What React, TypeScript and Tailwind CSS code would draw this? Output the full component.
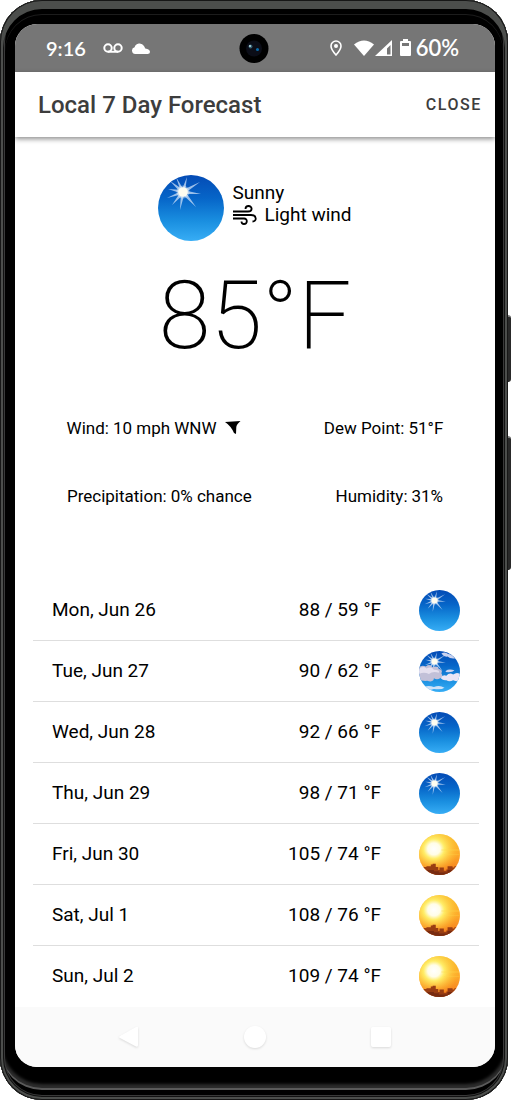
import React, { useId } from "react";
import { twMerge } from "tailwind-merge";

type Sky = "sunny" | "partly" | "hot";

const forecast: { day: string; temps: string; sky: Sky }[] = [
  { day: "Mon, Jun 26", temps: "88 / 59 °F", sky: "sunny" },
  { day: "Tue, Jun 27", temps: "90 / 62 °F", sky: "partly" },
  { day: "Wed, Jun 28", temps: "92 / 66 °F", sky: "sunny" },
  { day: "Thu, Jun 29", temps: "98 / 71 °F", sky: "sunny" },
  { day: "Fri, Jun 30", temps: "105 / 74 °F", sky: "hot" },
  { day: "Sat, Jul 1", temps: "108 / 76 °F", sky: "hot" },
  { day: "Sun, Jul 2", temps: "109 / 74 °F", sky: "hot" },
];

function Star() {
  return (
    <g transform="translate(25 17)">
      <g fill="#dbe8fb" opacity="0.7">
        <path d="M-2 0L-3 18L2 0zM-2 0L-7 -15L2 0zM-2 0L4 -15L2 0z" />
        <path d="M0 -2L18 2L0 2zM0 -2L-15 -3L0 2zM0 -2L-16 6L0 2z" />
        <path d="M-1.500 1.500L13 15L1.500 -1.500zM-1.500 -1.500L-11 13L1.500 1.500z" />
        <path d="M-1.500 -1.500L17 -10L1.500 1.500zM-1.500 1.500L-13 -11L1.500 -1.500z" />
      </g>
      <circle r="6.500" fill="#fff" opacity="0.35" />
      <circle r="4.800" fill="#fffdf0" />
    </g>
  );
}

function WeatherIcon({ sky, className }: { sky: Sky; className: string }) {
  const id = useId().replace(/[^a-zA-Z0-9]/g, "");
  const sk = "sky" + id;
  const cl = "clip" + id;
  const gl = "glow" + id;
  const bl = "blur" + id;
  return (
    <svg viewBox="0 0 66 66" className={twMerge("shrink-0", className)} aria-hidden="true">
      <defs>
        <clipPath id={cl}>
          <circle cx="33" cy="33" r="33" />
        </clipPath>
        <filter id={bl}>
          <feGaussianBlur stdDeviation="0.7" />
        </filter>
        <linearGradient id={sk} x1="0" y1="0" x2="0" y2="1">
          {sky === "hot" ? (
            <>
              <stop offset="0" stopColor="#f9bd30" />
              <stop offset="0.5" stopColor="#fda92a" />
              <stop offset="0.9" stopColor="#f57f1d" />
            </>
          ) : (
            <>
              <stop offset="0" stopColor="#044bb5" />
              <stop offset="0.35" stopColor="#0665c8" />
              <stop offset="0.7" stopColor="#1a8fe0" />
              <stop offset="1" stopColor="#37adf5" />
            </>
          )}
        </linearGradient>
        <radialGradient id={gl}>
          <stop offset="0" stopColor="#fff" />
          <stop offset="0.25" stopColor="#fffde8" />
          <stop offset="0.42" stopColor="#fff06a" stopOpacity="0.95" />
          <stop offset="1" stopColor="#ffc42e" stopOpacity="0" />
        </radialGradient>
      </defs>
      <g clipPath={`url(#${cl})`}>
        <rect width="66" height="66" fill={`url(#${sk})`} />
        {sky === "hot" ? (
          <>
            <ellipse cx="24" cy="24" rx="40" ry="38" fill={`url(#${gl})`} />
            <path d="M36 25h30v1.500H36zM40 32h26v1H40z" fill="#ffd84e" opacity="0.5" />
            <path
              d="M0 66V53H12V52H19V49H22V48H27V53H31V58H33V54H40V59H44V57H46V52H54V54H57V52H66V66z"
              fill="#993d12"
            />
            <path d="M10 58H24V60H32V62H46V58H56V66H10z" fill="#6c2511" opacity="0.75" />
          </>
        ) : (
          <g filter={`url(#${bl})`}>
            <Star />
          </g>
        )}
        {sky === "partly" && (
          <g filter={`url(#${bl})`}>
            <path d="M-2 28Q4 21 11 25Q17 20 22 26Q31 23 32 29Q39 30 36 36Q40 42 34 44Q29 47 24 44Q24 51 13 48Q6 49 -2 45z" fill="#c2c0d8" />
            <path d="M0 29Q6 23 12 28Q20 24 24 30Q34 30 32 35Q22 32 16 37Q8 33 0 37z" fill="#e5e0ef" />
            <path d="M35 44Q38 37 44 40Q49 34 55 38Q62 32 68 39V47Q62 50 55 47Q49 50 44 47Q39 48 35 44z" fill="#e8e6f6" />
            <path d="M43 32Q48 28 57 31Q54 35 43 34zM36 4Q42 0 47 5Q52 5 58 12Q50 13 46 9Q40 10 36 4z" fill="#cbd3ef" />
            <path d="M4 59Q14 54 24 58Q33 54 41 59Q36 63 24 61Q13 65 4 59z" fill="#cfe2f8" />
          </g>
        )}
      </g>
    </svg>
  );
}

function StatusBar() {
  return (
    <div className="flex h-12 items-center justify-between bg-[#767676] pr-9 pl-[31px] font-['Lato',sans-serif] text-xl font-semibold text-white">
      <div className="flex items-center">
        <span>9:16</span>
        <svg viewBox="0 0 20 10" className="ml-[17px] h-[10px] w-5" fill="none" stroke="currentColor" strokeWidth="2" aria-hidden="true">
          <circle cx="5" cy="5" r="3.700" />
          <circle cx="15" cy="5" r="3.700" />
          <path d="M5 8.800H15" />
        </svg>
        <svg viewBox="0 0 18 11" className="ml-[9px] h-[11px] w-[18px]" fill="currentColor" aria-hidden="true">
          <path d="M3.500 11A3.400 3.400 0 0 1 2.600 4.300A5.100 5.100 0 0 1 12 3L13.300 5.500Q18 6 18 9Q18 11 15.500 11z" />
        </svg>
      </div>
      <div className="flex items-center">
        <svg viewBox="0 0 12 16" className="h-4 w-3" aria-hidden="true">
          <path d="M6 1a5 5 0 0 1 5 5C11 9.500 6 15 6 15S1 9.500 1 6A5 5 0 0 1 6 1z" fill="none" stroke="currentColor" strokeWidth="1.600" />
          <circle cx="6" cy="6" r="2" fill="currentColor" />
        </svg>
        <svg viewBox="0 0 38 16" className="ml-3 h-4 w-[38px]" fill="currentColor" aria-hidden="true">
          <path d="M0 4.500Q10 -3.500 20 4.500L10 16z" />
          <path fillRule="evenodd" d="M38 0V16H21zM36.500 5L33 8.500V14.500H36.500z" />
        </svg>
        <svg viewBox="0 0 11 17" className="ml-2 h-[17px] w-[11px]" fill="currentColor" aria-hidden="true">
          <path fillRule="evenodd" d="M3 0H8V2H10Q11 2 11 3V16Q11 17 10 17H1Q0 17 0 16V3Q0 2 1 2H3zM2 4V7H9V4z" />
        </svg>
        <span className="ml-[5px] text-[22px]">60%</span>
      </div>
    </div>
  );
}

function WindIcon() {
  return (
    <svg viewBox="0 0 25 20" className="h-5 w-[25px]" fill="none" stroke="currentColor" strokeWidth="1.800" aria-hidden="true">
      <path d="M1 6.500H16C21 6.500 20.500 1 16.500 1Q13.500 1 13.500 4" />
      <path d="M1 10H19C25 10 25 16.500 20.500 16.500" />
      <path d="M1 13.500H12C16 13.500 15.500 19 12 19Q9.500 19 9.500 16.500" />
    </svg>
  );
}

function NavBar() {
  const button = "flex size-10 items-center justify-center";
  const icon = "size-6 drop-shadow-[0_1px_1px_rgba(0,0,0,0.13)]";
  return (
    <nav className="flex h-15 items-center justify-around bg-[#fafafa] px-[51px]" aria-label="System">
      <button className={button} aria-label="Back">
        <svg viewBox="0 0 24 24" className={icon} fill="#fff">
          <path d="M3 11L19 2Q21 1 21 3V20Q21 23 18 21L3 13Q1 12 3 11z" />
        </svg>
      </button>
      <button className={button} aria-label="Home">
        <svg viewBox="0 0 24 24" className={icon} fill="#fff">
          <circle cx="12" cy="12" r="11" />
        </svg>
      </button>
      <button className={button} aria-label="Recent apps">
        <svg viewBox="0 0 24 24" className={icon} fill="#fff">
          <rect x="2" y="2" width="20" height="20" rx="2" />
        </svg>
      </button>
    </nav>
  );
}

export default function App() {
  return (
    <div className="bg-white pr-[3px] font-['Roboto',sans-serif] text-black">
      <div className="relative rounded-[42px] bg-black pt-6 pr-[13px] pb-[33px] pl-[15px] shadow-[inset_0_0_0_1px_#171717,inset_0_0_0_3px_#4c4e4c,inset_0_6px_0_3px_#4c4e4c,inset_0_0_0_4px_#111,inset_0_0_0_5px_#393939,inset_0_9px_0_5px_#000,inset_0_10px_0_5px_#1c1c1c,inset_0_-10px_0_0_#000,inset_0_-12px_0_0_#5a5a5a,inset_0_-14px_3px_2px_#2c2c2c]">
        <span className="absolute top-[315px] -right-[3px] h-[67px] w-[3px] rounded-r-sm border-t-2 border-[#777] bg-[#292929]" />
        <span className="absolute top-[436px] -right-[3px] h-[134px] w-[3px] rounded-r-sm border-t-2 border-[#777] bg-[#292929]" />
        <span className="absolute top-[34px] left-1/2 flex size-[29px] -translate-x-1/2 items-center justify-center rounded-full bg-black">
          <svg viewBox="0 0 29 29" className="size-[29px]" aria-hidden="true">
            <circle cx="14.500" cy="14.500" r="8" fill="#0b0d17" />
            <circle cx="11" cy="12.500" r="2" fill="#335d70" />
            <circle cx="10.500" cy="12" r="1" fill="#bfe2e4" />
            <circle cx="18" cy="15.500" r="1.500" fill="#096aa8" />
          </svg>
        </span>
        <div className="overflow-hidden rounded-[22px] bg-white">
          <StatusBar />
          <header className="flex h-[65px] items-center justify-between bg-white pr-[13px] pl-[23px] text-[#3d3d3d] shadow-[0_2px_5px_rgba(0,0,0,0.45)]">
            <h1 className="text-2xl font-medium">Local 7 Day Forecast</h1>
            <button className="text-base font-medium tracking-widest">CLOSE</button>
          </header>
          <main>
            <section className="flex items-center justify-center gap-2 pt-[38px]">
              <WeatherIcon sky="sunny" className="size-[66px]" />
              <div className="pb-2 text-[19px] leading-[22px]">
                <p>Sunny</p>
                <p className="flex items-center gap-[7px]">
                  <WindIcon />
                  Light wind
                </p>
              </div>
            </section>
            <p className="mt-[19px] text-center text-[94px] leading-[112px] font-extralight">85°F</p>
            <dl className="mt-10 space-y-9 px-[10px] text-[17px] leading-8">
              <div className="flex justify-around">
                <div className="flex gap-1">
                  <dt>Wind:</dt>
                  <dd className="flex items-center gap-2">
                    10 mph WNW
                    <svg viewBox="0 0 16 14" className="h-[14px] w-4" aria-hidden="true">
                      <path d="M0 1L15.500 0Q11.500 3.500 11.300 6L11 13L9 12Q6 5 0 1z" />
                    </svg>
                  </dd>
                </div>
                <div className="flex gap-1">
                  <dt>Dew Point:</dt>
                  <dd>51°F</dd>
                </div>
              </div>
              <div className="flex justify-around">
                <div className="flex gap-1">
                  <dt>Precipitation:</dt>
                  <dd>0% chance</dd>
                </div>
                <div className="flex gap-1">
                  <dt>Humidity:</dt>
                  <dd>31%</dd>
                </div>
              </div>
            </dl>
            <ul className="mt-[68px] mr-4 ml-[18px] divide-y divide-[#dedede] text-[19px]">
              {forecast.map((row) => (
                <li key={row.day} className="flex h-[61px] items-center px-[19px]">
                  <span className="flex-1">{row.day}</span>
                  <span>{row.temps}</span>
                  <WeatherIcon sky={row.sky} className="ml-[38px] size-[41px]" />
                </li>
              ))}
            </ul>
          </main>
          <NavBar />
        </div>
      </div>
    </div>
  );
}
